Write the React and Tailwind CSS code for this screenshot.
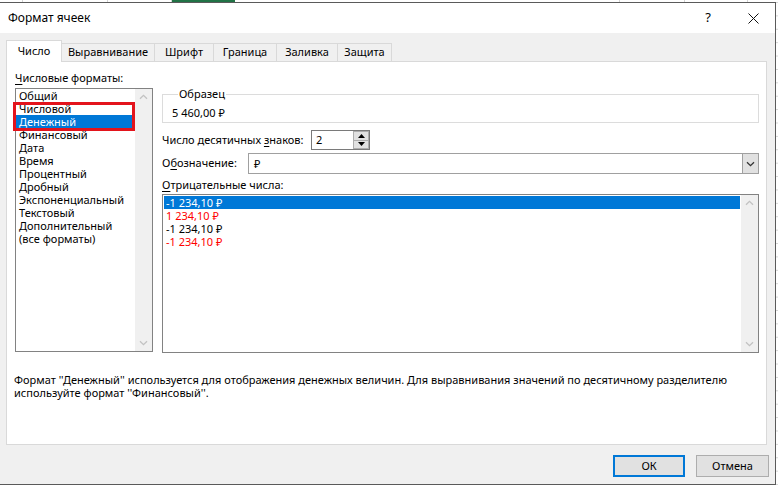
import React from 'react';

const formats = [
  'Общий',
  'Числовой',
  'Денежный',
  'Финансовый',
  'Дата',
  'Время',
  'Процентный',
  'Дробный',
  'Экспоненциальный',
  'Текстовый',
  'Дополнительный',
  '(все форматы)',
];

const negatives = [
  { text: '-1 234,10 ₽', red: false, selected: true },
  { text: '1 234,10 ₽', red: true },
  { text: '-1 234,10 ₽', red: false },
  { text: '-1 234,10 ₽', red: true },
];

const tabs = [
  { label: 'Выравнивание', w: 'w-[93px]' },
  { label: 'Шрифт', w: 'w-[59px]' },
  { label: 'Граница', w: 'w-[63px]' },
  { label: 'Заливка', w: 'w-[61px]' },
  { label: 'Защита', w: 'w-[54px]' },
];

const Chevron = ({ down, className }) => (
  <svg width="9" height="6" viewBox="0 0 9 6" className={className}>
    <path
      d={down ? 'M1 1.2l3.5 3.5L8 1.2' : 'M1 4.8l3.5-3.5L8 4.8'}
      fill="none"
      stroke="currentColor"
      strokeWidth="1.3"
    />
  </svg>
);

const Scrollbar = () => (
  <div className="w-[17px] bg-[#f0f0f0] flex flex-col justify-between items-center py-[5px] text-[#c2c2c2]">
    <Chevron />
    <Chevron down />
  </div>
);

const Dialog = () => (
  <div className="w-[776px] h-[483px] flex flex-col border-t border-r border-b border-[#5a5a5a] bg-[#f0f0f0]">
    {/* title bar */}
    <div className="h-[30px] bg-white flex items-center pl-[8px]">
      <span className="text-[12px]">Формат ячеек</span>
      <span className="ml-auto mr-[37px] text-[13px]">?</span>
      <svg width="11" height="11" viewBox="0 0 11 11" className="mr-[16px]">
        <path d="M0.5 0.5l10 10M10.5 0.5l-10 10" stroke="#111" strokeWidth="1" />
      </svg>
    </div>

    <div className="flex-1 flex flex-col pt-[7px]">
      {/* tabs */}
      <div className="flex items-end h-[21px] pl-[6px]">
        <div className="relative z-10 w-[56px] h-[22px] -mb-px bg-white border-l border-t border-r border-[#d9d9d9] flex items-center justify-center pb-[1px]">
          Число
        </div>
        {tabs.map((t) => (
          <div
            key={t.label}
            className={`${t.w} h-[18px] border-t border-r border-[#d9d9d9] flex items-center justify-center`}
          >
            {t.label}
          </div>
        ))}
      </div>

      {/* panel */}
      <div className="ml-[6px] w-[761px] h-[384px] bg-white border border-[#d9d9d9] flex flex-col pl-[8px]">
        <div className="flex">
          {/* left column */}
          <div className="w-[138px] pt-[8px] relative">
            <div className="leading-[16px] whitespace-nowrap">
              <span className="underline underline-offset-2">Ч</span>исловые форматы:
            </div>
            <div className="mt-[2px] h-[264px] border border-[#828282] flex">
              <div className="flex-1 pr-[1px]">
                {formats.map((f) => (
                  <div
                    key={f}
                    className={`h-[13px] leading-[13px] pl-[3px] whitespace-nowrap ${f === 'Денежный' ? 'bg-[#0078d7] text-white' : ''}`}
                  >
                    {f}
                  </div>
                ))}
              </div>
              <Scrollbar />
            </div>
            {/* highlight box */}
            <div className="absolute left-[-2px] top-[40px] w-[122px] h-[29px] border-[3px] border-[#e3141c]" />
          </div>

          {/* right column */}
          <div className="ml-[9px] w-[597px]">
            <fieldset className="mt-[24px] h-[37px] border border-[#dcdcdc] pl-[9px]">
              <legend className="ml-[6px] px-[1px] leading-[16px]">Образец</legend>
              <div className="pt-[3px] leading-[16px]">5 460,00 ₽</div>
            </fieldset>

            <div className="mt-[7px] h-[20px] flex items-center">
              <div className="w-[149px] whitespace-nowrap">
                Число десятичных <span className="underline underline-offset-2">з</span>наков:
              </div>
              <div className="w-[59px] h-[20px] border border-[#7a7a7a] flex">
                <div className="flex-1 pl-[4px] leading-[18px]">2</div>
                <div className="w-[16px] flex flex-col">
                  <div className="flex-1 bg-[#e1e1e1] border border-[#adadad] flex items-center justify-center">
                    <svg width="7" height="4" viewBox="0 0 7 4">
                      <path d="M0 4L3.5 0L7 4Z" fill="#000" />
                    </svg>
                  </div>
                  <div className="flex-1 bg-[#e1e1e1] border border-t-0 border-[#adadad] flex items-center justify-center">
                    <svg width="7" height="4" viewBox="0 0 7 4">
                      <path d="M0 0L3.5 4L7 0Z" fill="#000" />
                    </svg>
                  </div>
                </div>
              </div>
            </div>

            <div className="mt-[3px] h-[21px] flex items-center">
              <div className="w-[86px] whitespace-nowrap">
                О<span className="underline underline-offset-2">б</span>означение:
              </div>
              <div className="flex-1 h-[21px] border border-[#a0a0a0] flex">
                <div className="flex-1 pl-[5px] leading-[19px]">₽</div>
                <div className="w-[16px] bg-[#e1e1e1] border-l border-[#a0a0a0] flex items-center justify-center text-[#333]">
                  <Chevron down />
                </div>
              </div>
            </div>

            <div className="mt-[3px] leading-[16px]">
              <span className="underline underline-offset-2">О</span>трицательные числа:
            </div>
            <div className="mt-[1px] h-[159px] border border-[#828282] flex">
              <div className="flex-1 p-[1px]">
                {negatives.map((n, i) => (
                  <div
                    key={i}
                    className={`h-[13px] leading-[13px] pl-[2px] ${
                      n.selected ? 'bg-[#0078d7] text-white' : n.red ? 'text-[#ff0000]' : ''
                    }`}
                  >
                    {n.text}
                  </div>
                ))}
              </div>
              <Scrollbar />
            </div>
          </div>
        </div>

        <div className="mt-[20px] -ml-px leading-[13px] whitespace-nowrap">
          Формат ''Денежный'' используется для отображения денежных величин. Для выравнивания значений по
          десятичному разделителю
          <br />
          используйте формат ''Финансовый''.
        </div>
      </div>

      {/* buttons */}
      <div className="mt-[10px] flex justify-end pr-[6px] gap-[11px]">
        <button className="w-[72px] h-[22px] bg-[#e1e1e1] border-2 border-[#0078d7] flex items-center justify-center">
          ОК
        </button>
        <button className="w-[73px] h-[22px] bg-[#e1e1e1] border border-[#adadad] flex items-center justify-center">
          Отмена
        </button>
      </div>
    </div>
  </div>
);

export default function App() {
  return (
    <div className="w-[778px] h-[486px] overflow-hidden bg-white flex flex-col font-['Noto_Sans',sans-serif] text-[11px] text-black">
      {/* sheet behind the dialog, top edge */}
      <div className="h-[2px] flex">
        <div className="w-[23px] border-r border-[#d4d4d4]" />
        <div className="w-[85px] border-r border-[#d4d4d4]" />
        <div className="w-[64px] border-r border-[#d4d4d4]" />
        <div className="w-[63px] bg-[#217346]" />
        <div className="w-[385px] border-r border-[#d4d4d4]" />
        <div className="w-[65px] border-r border-[#d4d4d4]" />
        <div className="w-[63px] border-r border-[#d4d4d4]" />
      </div>
      <div className="flex">
        <Dialog />
        <div className="flex-1 bg-[linear-gradient(to_bottom,#d4d4d4_1px,transparent_1px)] bg-[length:100%_13.4px]" />
      </div>
      <div className="flex-1 bg-white" />
    </div>
  );
}
